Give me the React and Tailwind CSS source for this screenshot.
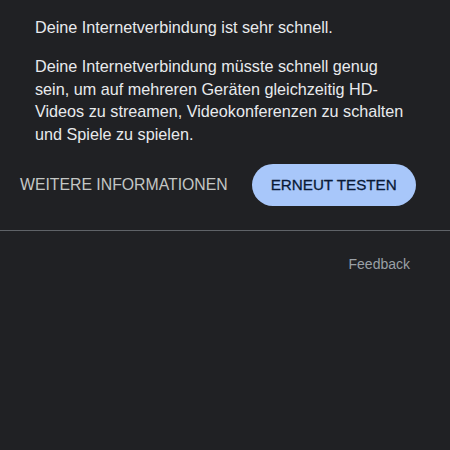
export default function App() {
  return (
    <div className="w-[450px] h-[450px] bg-[#202124] overflow-hidden" style={{ fontFamily: '"Liberation Sans", Arial, sans-serif' }}>
      <div className="pl-[35px] pr-[20px] pt-[16px]">
        <p className="text-[16.2px] leading-[22px] text-[#e8eaed]">Deine Internetverbindung ist sehr schnell.</p>
        <p className="mt-[17px] text-[16.2px] leading-[22.5px] text-[#e8eaed] whitespace-nowrap">
          Deine Internetverbindung müsste schnell genug<br />
          sein, um auf mehreren Geräten gleichzeitig HD-<br />
          Videos zu streamen, Videokonferenzen zu schalten<br />
          und Spiele zu spielen.
        </p>
      </div>
      <div className="flex items-center mt-[19px] pl-[20px]">
        <span className="text-[15.8px] text-[#c4c7c5]">WEITERE INFORMATIONEN</span>
        <button className="ml-[24px] h-[42px] w-[164px] rounded-full bg-[#a8c7fa] text-[#0a1a36] text-[15.2px] font-normal [-webkit-text-stroke:0.3px_#0a1a36]">ERNEUT TESTEN</button>
      </div>
      <div className="mt-[24px] h-px bg-[#5f6368]"></div>
      <div className="flex justify-end pr-[40px] mt-[23px]">
        <span className="text-[14px] text-[#9aa0a6]">Feedback</span>
      </div>
    </div>
  );
}
